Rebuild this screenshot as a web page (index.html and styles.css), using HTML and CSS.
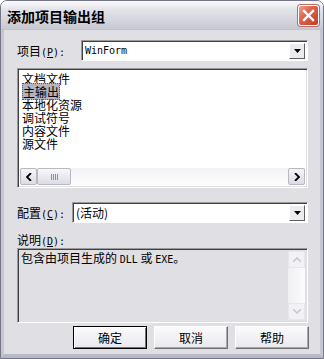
FILE: index.html
```html
<!DOCTYPE html>
<html>
<head>
<meta charset="utf-8">
<link rel="stylesheet" href="styles.css">
</head>
<body>
<div class="win">
  <div class="titlebar">
    <span class="title">添加项目输出组</span>
    <span class="close"><svg width="13" height="13" viewBox="0 0 13 13"><path d="M2 2 L11 11 M11 2 L2 11" stroke="#fff" stroke-width="2.4" stroke-linecap="square"/></svg></span>
  </div>
  <div class="client">
    <div class="row row1">
      <span class="label lab1">项目<span class="a">(<u>P</u>):</span></span>
      <div class="combo">
        <span class="val a">WinForm</span>
        <span class="ddbtn"><svg width="7" height="4" viewBox="0 0 7 4"><path d="M0 0 H7 L3.5 4 Z" fill="#000"/></svg></span>
      </div>
    </div>
    <div class="listbox sunken">
      <div class="items">
        <div class="item">文档文件</div>
        <div class="item"><span class="sel">主输出</span></div>
        <div class="item">本地化资源</div>
        <div class="item">调试符号</div>
        <div class="item">内容文件</div>
        <div class="item">源文件</div>
      </div>
      <div class="hscroll">
        <span class="sbtn"><svg width="6" height="8" viewBox="0 0 6 8"><path d="M5 0 L1 4 L5 8" stroke="#000" stroke-width="1.8" fill="none"/></svg></span>
        <span class="thumb"><span class="grip"></span></span>
        <span class="track"></span>
        <span class="sbtn"><svg width="6" height="8" viewBox="0 0 6 8"><path d="M1 0 L5 4 L1 8" stroke="#000" stroke-width="1.8" fill="none"/></svg></span>
      </div>
    </div>
    <div class="row row2">
      <span class="label lab2">配置<span class="a">(<u>C</u>):</span></span>
      <div class="combo">
        <span class="val">(活动)</span>
        <span class="ddbtn"><svg width="7" height="4" viewBox="0 0 7 4"><path d="M0 0 H7 L3.5 4 Z" fill="#000"/></svg></span>
      </div>
    </div>
    <div class="label lab3">说明<span class="a">(<u>D</u>):</span></div>
    <div class="desc sunken">
      <div class="desctext">包含由项目生成的 <span class="a">DLL</span> 或 <span class="a">EXE</span>。</div>
      <div class="vscroll">
        <span class="vbtn"><svg width="8" height="5" viewBox="0 0 8 5"><path d="M0 5 L4 1 L8 5" stroke="#c8c8d0" stroke-width="1.6" fill="none"/></svg></span>
        <span class="vtrack"></span>
        <span class="vbtn"><svg width="8" height="5" viewBox="0 0 8 5"><path d="M0 0 L4 4 L8 0" stroke="#c8c8d0" stroke-width="1.6" fill="none"/></svg></span>
      </div>
    </div>
    <div class="buttons">
      <button class="btn def">确定</button>
      <button class="btn">取消</button>
      <button class="btn">帮助</button>
    </div>
  </div>
</div>
</body>
</html>
```
FILE: styles.css
```css
html, body {
  margin: 0;
  padding: 0;
  background: #ffffff;
}
body {
  font-family: "Noto Sans CJK SC", "DejaVu Sans", sans-serif;
  font-size: 12px;
  color: #000;
}
.a {
  font-family: "DejaVu Sans Mono", "Liberation Mono", monospace;
  font-size: 10px;
}
.win {
  width: 324px;
  height: 359px;
  box-sizing: border-box;
  border: 1px solid #76768a;
  border-radius: 7px 7px 0 0;
  background: #e0dfe3;
  display: flex;
  flex-direction: column;
  overflow: hidden;
}
.titlebar {
  height: 28px;
  flex: none;
  display: flex;
  align-items: center;
  justify-content: space-between;
  padding: 0 4px 0 6px;
  background: linear-gradient(#fbfbfd 0%, #e3e3ea 30%, #d4d4dc 70%, #c8c8d2 100%);
  border-bottom: 1px solid #c2c2cc;
}
.title {
  font-weight: bold;
  font-size: 14px;
  color: #000;
  margin-top: 1px;
}
.close {
  width: 21px;
  height: 21px;
  box-sizing: border-box;
  border: 1px solid #fff;
  border-radius: 3px;
  background: linear-gradient(135deg, #f0a088 0%, #e0634b 40%, #c23c28 100%);
  display: flex;
  align-items: center;
  justify-content: center;
  box-shadow: 0 0 0 1px #b07070;
}
.client {
  flex: 1;
  min-height: 0;
  display: flex;
  flex-direction: column;
  padding: 10px 12px 0 13px;
  border-left: 3px solid #c6c6ce;
  border-right: 3px solid #c6c6ce;
  border-bottom: 4px solid #b8b8c2;
}
.row {
  display: flex;
  align-items: center;
  height: 21px;
  flex: none;
}
.label {
  display: flex;
  align-items: baseline;
  height: 14px;
  line-height: 14px;
  white-space: nowrap;
  flex: none;
}
.lab1 { width: 64px; }
.lab2 { width: 55px; }
.combo {
  flex: 1;
  height: 21px;
  box-sizing: border-box;
  background: #fff;
  border-top: 1px solid #9a9a9a;
  border-left: 1px solid #9a9a9a;
  border-right: 1px solid #fff;
  border-bottom: 1px solid #fff;
  box-shadow: inset 1px 1px 0 #404040;
  display: flex;
  align-items: center;
  padding: 0 2px 0 3px;
}
.val {
  flex: 1;
  line-height: 14px;
}
.ddbtn {
  width: 16px;
  height: 16px;
  box-sizing: border-box;
  background: #ecebef;
  border: 1px solid;
  border-color: #fff #606060 #606060 #fff;
  display: flex;
  align-items: center;
  justify-content: center;
}
.sunken {
  box-sizing: border-box;
  border-top: 1px solid #9a9a9a;
  border-left: 1px solid #9a9a9a;
  border-right: 1px solid #fff;
  border-bottom: 1px solid #fff;
  box-shadow: inset 1px 1px 0 #404040, inset -1px -1px 0 #e0dfe3;
}
.listbox {
  margin-top: 7px;
  height: 120px;
  flex: none;
  background: #fff;
  display: flex;
  flex-direction: column;
  padding: 2px;
}
.items {
  flex: 1;
  padding: 1px 0 0 2px;
}
.item {
  height: 13px;
  line-height: 13px;
  white-space: nowrap;
}
.sel {
  background: #b2b4bf;
  outline: 1px dotted #5a5a66;
  outline-offset: -1px;
  padding: 0 1px;
}
.hscroll {
  height: 17px;
  flex: none;
  display: flex;
  background: linear-gradient(#f3f3f5, #fdfdfd);
}
.sbtn {
  width: 17px;
  height: 17px;
  box-sizing: border-box;
  border: 1px solid #b8b8c4;
  background: linear-gradient(#f6f6f8, #dcdce2);
  display: flex;
  align-items: center;
  justify-content: center;
  border-radius: 2px;
}
.thumb {
  width: 34px;
  height: 17px;
  box-sizing: border-box;
  border: 1px solid #b8b8c4;
  border-radius: 2px;
  background: linear-gradient(#f8f8fa, #dcdde4);
  display: flex;
  align-items: center;
  justify-content: center;
}
.grip {
  width: 7px;
  height: 6px;
  background: repeating-linear-gradient(90deg, #8e8ea0 0 1px, transparent 1px 2px);
}
.track { flex: 1; }
.row2 { margin-top: 14px; }
.lab3 { margin-top: 10px; }
.desc {
  margin-top: 1px;
  height: 75px;
  flex: none;
  display: flex;
  padding: 2px;
  background: #e0dfe3;
}
.desctext {
  flex: 1;
  padding: 0 0 0 1px;
  line-height: 14px;
}
.vscroll {
  width: 17px;
  display: flex;
  flex-direction: column;
  background: linear-gradient(90deg, #f0f0f4, #fbfbfd);
}
.vbtn {
  width: 17px;
  height: 17px;
  box-sizing: border-box;
  border: 1px solid #e6e6ec;
  background: #f2f2f6;
  display: flex;
  align-items: center;
  justify-content: center;
}
.vtrack { flex: 1; }
.buttons {
  display: flex;
  justify-content: flex-end;
  gap: 7px;
  margin-top: 3px;
  margin-right: -1px;
  flex: none;
}
.btn {
  width: 74px;
  height: 23px;
  box-sizing: border-box;
  font-family: "Noto Sans CJK SC", sans-serif;
  font-size: 12px;
  line-height: 14px;
  color: #000;
  background: linear-gradient(#fbfbfc, #e8e8ee);
  border: 1px solid;
  border-color: #fff #707070 #707070 #fff;
  box-shadow: inset -1px -1px 0 #a8a8b0;
  padding: 0;
  margin: 0;
}
.btn.def {
  border: 1px solid #000;
  box-shadow: inset 1px 1px 0 #fff, inset -1px -1px 0 #707070;
}
```
